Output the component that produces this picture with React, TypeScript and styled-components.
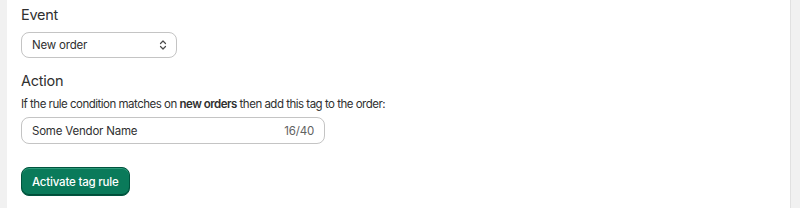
import React from 'react'
import styled, { createGlobalStyle } from 'styled-components'

const Global = createGlobalStyle`
  html, body {
    margin: 0;
    padding: 0;
    background: #f1f1f1;
    font-family: Inter, "Noto Sans", sans-serif;
    color: #303030;
  }
`

const Page = styled.div`
  display: flex;
  height: 208px;
  padding: 0 9px 0 7px;
  box-sizing: border-box;
`

const Card = styled.div`
  flex: 1;
  background: #fff;
  border-right: 1px solid #e1e1e1;
  padding: 5px 14px 0;
  display: flex;
  flex-direction: column;
  align-items: flex-start;
`

const Label = styled.div<{ $top?: number }>`
  font-size: 14.5px;
  line-height: 20px;
  letter-spacing: -0.25px;
  color: #303030;
  margin-top: ${(p) => p.$top ?? 0}px;
`

const Help = styled.div`
  font-size: 11.5px;
  line-height: 16px;
  letter-spacing: -0.5px;
  color: #303030;
  margin-top: 5px;
  b {
    font-weight: 600;
  }
`

const SelectBox = styled.div`
  margin-top: 7px;
  width: 156px;
  height: 26px;
  box-sizing: border-box;
  border: 1px solid #8a8a8a80;
  border-radius: 8px;
  display: flex;
  align-items: center;
  justify-content: space-between;
  padding: 0 8px 0 10px;
  font-size: 11.5px;
  letter-spacing: -0.2px;
  color: #303030;
`

const Field = styled.div`
  margin-top: 5px;
  width: 304px;
  height: 27px;
  box-sizing: border-box;
  border: 1px solid #8a8a8a80;
  border-radius: 8px;
  display: flex;
  align-items: center;
  justify-content: space-between;
  padding: 0 10px;
  font-size: 11.5px;
  letter-spacing: -0.2px;
`

const Counter = styled.span`
  color: #616161;
`

const Button = styled.button`
  margin-top: 23px;
  height: 29px;
  padding: 0 10px;
  border-radius: 8px;
  border: 1px solid #00543e;
  background: #0a7a5a;
  box-shadow: inset 0 -1px 0 #004d38, inset 0 1px 0 #2c9a79;
  color: #fff;
  font-family: inherit;
  font-size: 11.5px;
  letter-spacing: -0.2px;
  font-weight: 500;
`

const Chevron = () => (
  <svg width="10" height="12" viewBox="0 0 10 12" fill="none" stroke="#4a4a4a" strokeWidth="1.2" strokeLinecap="round" strokeLinejoin="round">
    <path d="M2.5 4.5 5 2l2.5 2.5" />
    <path d="M2.5 7.5 5 10l2.5-2.5" />
  </svg>
)

export default function App() {
  return (
    <>
      <Global />
      <Page>
        <Card>
          <Label>Event</Label>
          <SelectBox>
            <span>New order</span>
            <Chevron />
          </SelectBox>
          <Label $top={13}>Action</Label>
          <Help>
            If the rule condition matches on <b>new orders</b> then add this tag to the order:
          </Help>
          <Field>
            <span>Some Vendor Name</span>
            <Counter>16/40</Counter>
          </Field>
          <Button>Activate tag rule</Button>
        </Card>
      </Page>
    </>
  )
}
